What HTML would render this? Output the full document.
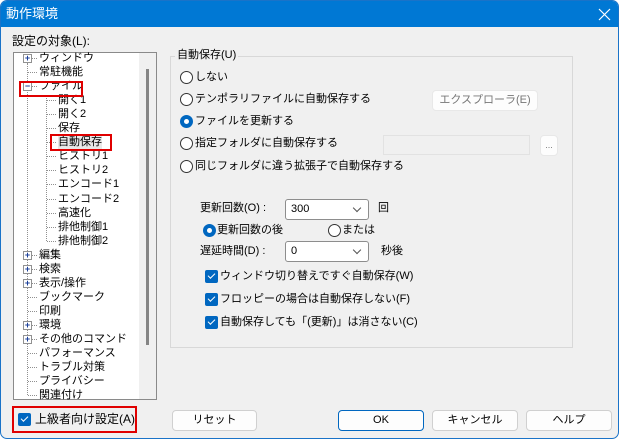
<!DOCTYPE html>
<html><head><meta charset="utf-8"><style>
*{margin:0;padding:0;box-sizing:border-box}
body{width:619px;height:439px;background:#fff;font-family:"Liberation Sans","Noto Sans CJK JP",sans-serif;font-size:11px;color:#000;position:relative;overflow:hidden}
.win{position:absolute;left:0;top:0;width:619px;height:439px;background:#f0f0f0;border:1px solid #1a73c8;border-radius:7px 7px 7px 7px;overflow:hidden}
.title{position:absolute;left:0;top:0;width:619px;height:26px;background:#0078d4;color:#fff;font-size:13px;line-height:26px;padding-left:5px}
.a{position:absolute;white-space:nowrap;line-height:14px}
.tree{position:absolute;left:12px;top:51px;width:144px;height:348px;background:#fff;border:1px solid #8a8a8a;border-right:none}
.track{position:absolute;left:138px;top:51px;width:18px;height:348px;background:#f0f0f0;border-right:1px solid #8a8a8a;border-bottom:1px solid #8a8a8a;border-top:1px solid #8a8a8a}
.thumb{position:absolute;left:145px;top:68px;width:3px;height:276px;background:#858585}
.pm{position:absolute;width:9px;height:9px;border:1px solid #919191;background:#fff;font-size:9px;line-height:7px;text-align:center;color:#1b3f9a;font-weight:bold}
.vd{position:absolute;border-left:1px dotted #909090}
.hd{position:absolute;border-top:1px dotted #909090;width:6px}
.red{position:absolute;border:2px solid #e00000}
.grp{position:absolute;left:169px;top:55px;width:403px;height:292px;border:1px solid #d8d8d8}
.rad{position:absolute;width:13px;height:13px;border:1px solid #333;border-radius:50%;background:#fff}
.rad.on{background:#0067c0;border-color:#0067c0}
.rad.on::after{content:"";position:absolute;left:3px;top:3px;width:5px;height:5px;background:#fff;border-radius:50%}
.btn{position:absolute;height:21px;border:1px solid #d0d0d0;border-radius:4px;background:#fdfdfd;text-align:center;line-height:19px}
.cb{position:absolute;width:13px;height:13px;background:#0067c0;border-radius:2px}
.cb::after{content:"";position:absolute;left:3px;top:3px;width:6px;height:3px;border-left:1.5px solid #fff;border-bottom:1.5px solid #fff;transform:rotate(-45deg)}
.combo{position:absolute;height:21px;border:1px solid #8d8d8d;border-radius:3px;background:#fff;padding-left:5px;line-height:19px}
.combo::after{content:"";position:absolute;right:8px;top:5px;width:5px;height:5px;border-right:1px solid #555;border-bottom:1px solid #555;transform:rotate(45deg)}
</style></head><body><div class="win">
<div class="title">動作環境</div>
<svg style="position:absolute;left:597px;top:7px" width="14" height="14"><path d="M1 1L12 12M12 1L1 12" stroke="#fff" stroke-width="1.2"/></svg>
<div class="a" style="left:11px;top:33px;font-size:12px">設定の対象(L):</div>
<div class="tree"></div><div class="track"></div><div class="thumb"></div>
<div class="vd" style="left:26px;top:62px;height:332px"></div>
<div class="vd" style="left:45px;top:94px;height:146px"></div>
<div id="t"></div>
<div class="red" style="left:18px;top:80px;width:64px;height:16px"></div>
<div class="red" style="left:49px;top:133px;width:62px;height:17px"></div>
<div class="grp"></div>
<div class="a" style="left:174px;top:47px;background:#f0f0f0;padding:0 2px">自動保存(U)</div>
<div class="rad" style="left:179px;top:70px"></div><div class="a" style="left:194px;top:69px">しない</div>
<div class="rad" style="left:179px;top:92px"></div><div class="a" style="left:194px;top:91px">テンポラリファイルに自動保存する</div>
<div class="rad on" style="left:179px;top:114px"></div><div class="a" style="left:194px;top:113px">ファイルを更新する</div>
<div class="rad" style="left:179px;top:136px"></div><div class="a" style="left:194px;top:135px">指定フォルダに自動保存する</div>
<div class="rad" style="left:179px;top:159px"></div><div class="a" style="left:194px;top:158px">同じフォルダに違う拡張子で自動保存する</div>
<div class="btn" style="left:431px;top:89px;width:106px;color:#777;border-color:#e8e8e8">エクスプローラ(E)</div>
<div style="position:absolute;left:382px;top:134px;width:147px;height:20px;border:1px solid #e2e2e2;background:#f0f0f0"></div>
<div class="btn" style="left:539px;top:134px;width:18px;color:#777;border-color:#e8e8e8;font-size:9px">...</div>
<div class="a" style="left:199px;top:200px">更新回数(O) :</div>
<div class="combo" style="left:284px;top:198px;width:84px">300</div>
<div class="a" style="left:377px;top:200px">回</div>
<div class="rad on" style="left:202px;top:223px"></div><div class="a" style="left:216px;top:222px">更新回数の後</div>
<div class="rad" style="left:327px;top:223px"></div><div class="a" style="left:341px;top:222px">または</div>
<div class="a" style="left:199px;top:243px">遅延時間(D) :</div>
<div class="combo" style="left:284px;top:240px;width:84px">0</div>
<div class="a" style="left:380px;top:243px">秒後</div>
<div class="cb" style="left:204px;top:269px"></div><div class="a" style="left:219px;top:268px">ウィンドウ切り替えですぐ自動保存(W)</div>
<div class="cb" style="left:204px;top:292px"></div><div class="a" style="left:219px;top:291px">フロッピーの場合は自動保存しない(F)</div>
<div class="cb" style="left:204px;top:315px"></div><div class="a" style="left:219px;top:314px">自動保存しても「(更新)」は消さない(C)</div>
<div class="red" style="left:11px;top:405px;width:125px;height:27px"></div>
<div class="cb" style="left:17px;top:412px"></div><div class="a" style="left:34px;top:411px;font-size:12px">上級者向け設定(A)</div>
<div class="btn" style="left:171px;top:409px;width:85px">リセット</div>
<div class="btn" style="left:337px;top:409px;width:86px;border-color:#0067c0">OK</div>
<div class="btn" style="left:431px;top:409px;width:86px">キャンセル</div>
<div class="btn" style="left:525px;top:409px;width:86px">ヘルプ</div>
</div>
<script>
var items=[["ウィンドウ",0,1],["常駐機能",0,0],["ファイル",0,2],["開く1",1],["開く2",1],["保存",1],["自動保存",1],["ヒストリ1",1],["ヒストリ2",1],["エンコード1",1],["エンコード2",1],["高速化",1],["排他制御1",1],["排他制御2",1],["編集",0,1],["検索",0,1],["表示/操作",0,1],["ブックマーク",0,0],["印刷",0,0],["環境",0,1],["その他のコマンド",0,1],["パフォーマンス",0,0],["トラブル対策",0,0],["プライバシー",0,0],["関連付け",0,0]];
var h="";items.forEach(function(it,i){var y=50+i*14.05;var cy=Math.round(y+7);
if(it[1]){h+='<div class="hd" style="left:46px;top:'+cy+'px;width:9px"></div><div class="a" style="left:57px;top:'+Math.round(y)+'px;'+(i==6?'background:#e8e8e8;':'')+'">'+it[0]+'</div>';}
else{h+='<div class="hd" style="left:27px;top:'+cy+'px;width:9px"></div><div class="a" style="left:38px;top:'+Math.round(y)+'px">'+it[0]+'</div>';
if(it[2])h+='<div class="pm" style="left:22px;top:'+(cy-4)+'px">'+(it[2]==1?'+':'−')+'</div>';}});
document.getElementById("t").innerHTML=h;
</script>
</body></html>
